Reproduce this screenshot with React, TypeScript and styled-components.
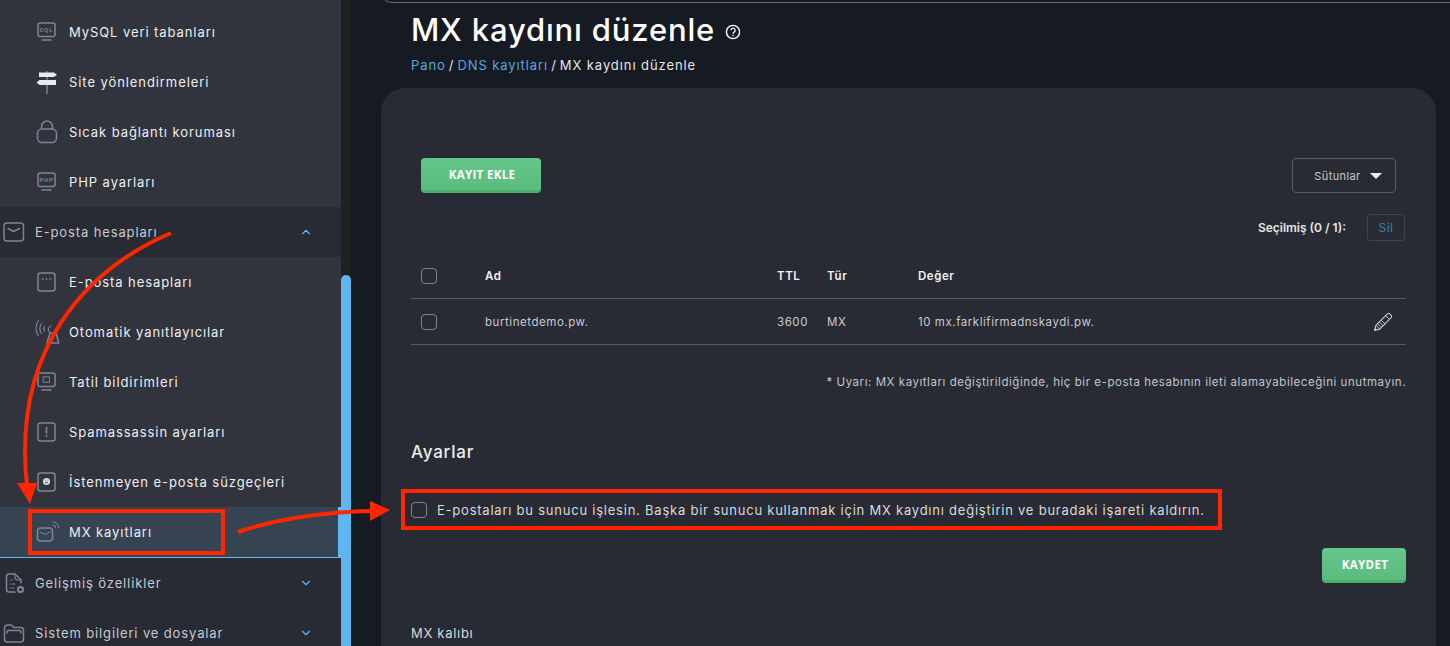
import React from 'react'
import styled, { createGlobalStyle } from 'styled-components'
import { ChevronDown, ChevronUp } from 'lucide-react'

const GlobalStyle = createGlobalStyle`
  html, body {
    margin: 0;
    height: 100%;
    overflow: hidden;
    background: #161a22;
    font-family: "Inter", "Liberation Sans", sans-serif;
  }
`

const iconColor = '#7d8598'

const Screen = styled.div`
  display: flex;
  width: 1450px;
  height: 646px;
  overflow: hidden;
  position: relative;
  background: #161a22;
`

const Sidebar = styled.nav`
  flex: 0 0 341px;
  height: 646px;
  overflow: hidden;
  background: #282b33;
`

const SubList = styled.div<{ $top?: number }>`
  background: #31343d;
  padding-top: ${(props) => props.$top || 0}px;
`

const SubRow = styled.div<{ $active?: boolean }>`
  height: 50px;
  display: flex;
  align-items: center;
  padding-left: 34px;
  box-sizing: border-box;
  color: #eceef2;
  font-size: 13px;
  letter-spacing: 0.92px;
  ${(props) =>
    props.$active &&
    `
    height: 51px;
    background: #364452;
    border-right: 3px solid #5eb6f2;
    border-bottom: 1px solid #5eb6f2;
  `}
`

const IconSlot = styled.span`
  width: 35px;
  flex: 0 0 35px;
  box-sizing: border-box;
  padding-left: 2px;
  display: flex;
  align-items: center;
  svg {
    display: block;
  }
`

const ResponderSlot = styled(IconSlot)`
  padding-left: 0;
  margin-left: 0;
`

const GroupRow = styled.div`
  height: 50px;
  display: flex;
  align-items: center;
  padding: 0 28px 0 3px;
  color: #c6c9d0;
  font-size: 13px;
  letter-spacing: 0.87px;
`

const GroupIcon = styled.span`
  width: 32px;
  flex: 0 0 32px;
  display: flex;
  align-items: center;
`

const GroupLabel = styled.span`
  flex: 1;
`

const Chevron = styled.span`
  color: #5eb6f2;
  display: flex;
`

const Track = styled.div`
  flex: 0 0 10px;
  height: 646px;
  background: #1f2022;
  display: flex;
  flex-direction: column;
  justify-content: flex-end;
`

const Thumb = styled.div`
  height: 371px;
  background: #5eb6f2;
  border-radius: 5px 5px 0 0;
`

const Main = styled.main`
  flex: 1;
  min-width: 0;
  padding: 0 14px 0 30px;
  position: relative;
`

const TopBarEdge = styled.div`
  position: absolute;
  top: -28px;
  left: 29px;
  right: -40px;
  height: 31px;
  border: 1px solid #6b6e76;
  border-radius: 12px;
  box-sizing: border-box;
`

const TitleRow = styled.div`
  display: flex;
  align-items: center;
  padding: 11px 0 0 30px;
  height: 37px;
`

const Title = styled.h1`
  margin: 0;
  color: #ffffff;
  font-size: 31px;
  font-weight: 500;
  letter-spacing: 0.83px;
  line-height: 37px;
`

const HelpIcon = styled.svg`
  margin-left: 10px;
  margin-top: 4px;
`

const Crumbs = styled.div`
  padding: 9px 0 0 30px;
  height: 16px;
  line-height: 16px;
  display: flex;
  gap: 3px;
  font-size: 13px;
  letter-spacing: 0.92px;
  color: #e4e6ea;
`

const CrumbLink = styled.span`
  color: #56a8e0;
`

const Card = styled.section`
  margin-top: 15px;
  height: 570px;
  background: #282b33;
  border-radius: 24px 24px 0 0;
  padding: 70px 30px 0;
  box-sizing: border-box;
`

const Toolbar = styled.div`
  display: flex;
  justify-content: space-between;
  padding: 0 10px;
`

const GreenButton = styled.button<{ $w: number }>`
  width: ${(props) => props.$w}px;
  height: 35px;
  padding: 1px 0 0 2px;
  border: 0;
  border-bottom: 3px solid #4cae6b;
  border-radius: 4px;
  background: linear-gradient(#65c689, #5abc7d);
  color: #ffffff;
  font-family: "Open Sans", sans-serif;
  font-size: 11.5px;
  font-weight: 700;
  letter-spacing: 0.35px;
`

const ColumnsButton = styled.button`
  width: 104px;
  height: 35px;
  padding: 0 0 0 8px;
  border: 1px solid #5a5e66;
  border-radius: 4px;
  background: transparent;
  color: #c8cad0;
  font-family: inherit;
  font-size: 11px;
  letter-spacing: 0.4px;
  display: flex;
  align-items: center;
  justify-content: center;
  gap: 9px;
`

const Caret = styled.span`
  width: 0;
  height: 0;
  border-left: 6px solid transparent;
  border-right: 6px solid transparent;
  border-top: 6px solid #f0f0f0;
`

const SelectedRow = styled.div`
  display: flex;
  justify-content: flex-end;
  align-items: center;
  margin-top: 21px;
  padding-right: 1px;
  gap: 21px;
`

const SelectedLabel = styled.span`
  color: #e4e6ea;
  font-size: 12px;
  font-weight: 600;
`

const DeleteButton = styled.button`
  width: 38px;
  height: 27px;
  padding: 0;
  border: 1px solid #3e434c;
  border-radius: 3px;
  background: transparent;
  color: #3a7fae;
  font-family: inherit;
  font-size: 12px;
  letter-spacing: 0.5px;
`

const Grid = styled.div`
  display: grid;
  grid-template-columns: 74px 292px 50px 91px 1fr 46px;
  margin-top: 12px;
`

const Cell = styled.div<{ $head?: boolean }>`
  height: 46px;
  display: flex;
  align-items: center;
  box-sizing: border-box;
  border-bottom: 1px solid #55585f;
  color: ${(props) => (props.$head ? '#f0f1f3' : '#c8cad0')};
  font-size: 11.5px;
  font-weight: ${(props) => (props.$head ? 600 : 400)};
  letter-spacing: 0.55px;
`

const ActionCell = styled(Cell)`
  justify-content: flex-end;
  padding-right: 13px;
`

const Box = styled.span`
  display: block;
  flex: 0 0 16px;
  width: 16px;
  height: 16px;
  box-sizing: border-box;
  border: 1px solid #7d8598;
  border-radius: 4px;
  background: transparent;
  margin-left: 10px;
`

const Warning = styled.p`
  margin: 29px 0 0;
  text-align: right;
  color: #c2c5cb;
  font-size: 11.5px;
  letter-spacing: 0.55px;
  line-height: 16px;
`

const SectionTitle = styled.h2`
  margin: 51px 0 0;
  color: #eceef2;
  font-size: 17px;
  font-weight: 500;
  letter-spacing: 0.8px;
  line-height: 22px;
`

const CheckRow = styled.label`
  display: flex;
  align-items: center;
  margin-top: 37px;
  height: 20px;
  color: #d8dade;
  font-size: 13px;
  letter-spacing: 0.77px;
  gap: 10px;
  white-space: nowrap;
  ${Box} {
    margin-left: 0;
  }
`

const SaveRow = styled.div`
  display: flex;
  justify-content: flex-end;
  margin-top: 28px;
`

const SubTitle = styled.div`
  margin-top: 40px;
  color: #d8dade;
  font-size: 13px;
  letter-spacing: 0.7px;
  line-height: 20px;
`

const RedBox = styled.div<{ $x: number; $y: number; $w: number; $h: number }>`
  position: absolute;
  left: ${(props) => props.$x}px;
  top: ${(props) => props.$y}px;
  width: ${(props) => props.$w}px;
  height: ${(props) => props.$h}px;
  box-sizing: border-box;
  border: 4px solid #ff2600;
`

const Arrows = styled.svg`
  position: absolute;
  left: 0;
  top: 0;
  pointer-events: none;
`

const Stroke = { fill: 'none', stroke: iconColor, strokeWidth: 1.5, strokeLinecap: 'round', strokeLinejoin: 'round' } as const

const Monitor: React.FC<{ children?: React.ReactNode }> = ({ children }) => (
  <svg width="20" height="20" viewBox="0 0 20 20">
    <rect x="2" y="1" width="17" height="13.5" rx="2" {...Stroke} />
    <path d="M6 18h9" {...Stroke} />
    {children}
  </svg>
)

const MonitorText = styled.text`
  font-family: "Liberation Sans", sans-serif;
  font-size: 5.5px;
  font-weight: 700;
  fill: #7d8598;
`

const SqlIcon = () => (
  <Monitor>
    <MonitorText x="10.5" y="10" textAnchor="middle">SQL</MonitorText>
  </Monitor>
)

const PhpIcon = () => (
  <Monitor>
    <MonitorText x="10.5" y="10" textAnchor="middle">PHP</MonitorText>
  </Monitor>
)

const HolidayIcon = () => (
  <Monitor>
    <rect x="7.5" y="4.8" width="6" height="5.5" {...Stroke} strokeWidth={1} />
  </Monitor>
)

const SignIcon = () => (
  <svg width="22" height="25" viewBox="0 0 22 25">
    <path d="M11 1v23" stroke={iconColor} strokeWidth="1.4" />
    <path d="M3 2.5h15l3 2.2-3 2.2H3z" fill="#e8e9ec" />
    <path d="M3.5 10H20v5H3.5L.5 12.5z" fill="#e8e9ec" />
  </svg>
)

const LockIcon = () => (
  <svg width="22" height="24" viewBox="0 0 22 24">
    <rect x="1.5" y="9" width="19" height="13.5" rx="4.5" {...Stroke} />
    <path d="M5.5 9V6.5a5.5 5.5 0 0 1 11 0V9" {...Stroke} />
  </svg>
)

const AccountIcon = () => (
  <svg width="20" height="20" viewBox="0 0 20 20">
    <rect x="2" y="1" width="17" height="18" rx="2.5" {...Stroke} />
    <path d="M6.5 7h.6M10.2 7h.6M13.9 7h.6" {...Stroke} />
  </svg>
)

const ResponderIcon = () => (
  <svg width="26" height="26" viewBox="0 0 26 26">
    <path d="M4.5 1.5a14 14 0 0 0-2.5 8 14 14 0 0 0 2.5 7.5M7.5 4.5a9 9 0 0 0 0 10M10.5 7a5 5 0 0 0 0 5" {...Stroke} strokeWidth={1.1} />
    <path d="M16 14h6l2.8 10H13z" {...Stroke} />
    <path d="M16 14a4 4 0 0 1 1-7" {...Stroke} strokeWidth={1.1} />
  </svg>
)

const AlertIcon = () => (
  <svg width="20" height="20" viewBox="0 0 20 20">
    <rect x="2" y="1" width="17" height="18" rx="2.5" {...Stroke} />
    <path d="M10.5 5.5v5.5M10.5 13.5v.6" {...Stroke} strokeWidth={1.7} />
  </svg>
)

const FilterIcon = () => (
  <svg width="20" height="20" viewBox="0 0 20 20">
    <rect x="2" y="1" width="17" height="18" rx="2.5" {...Stroke} />
    <circle cx="10.5" cy="9.5" r="3.6" fill="#d8dade" />
    <path d="M8.9 8.6h.4M11.7 8.6h.4M9.1 10.6h2.8" stroke="#31343d" strokeWidth="0.8" />
  </svg>
)

const MxIcon = () => (
  <svg width="24" height="24" viewBox="0 0 24 24">
    <rect x="1.5" y="8" width="15" height="13" rx="3" {...Stroke} />
    <path d="M4 12l5 2.5 5-2.5" {...Stroke} strokeWidth={1} />
    <path d="M17 5a3 3 0 0 1 3 3M17 2a6 6 0 0 1 6 6" {...Stroke} strokeWidth={1} />
  </svg>
)

const MailIcon = () => (
  <svg width="22" height="20" viewBox="0 0 22 20">
    <rect x="1" y="1" width="19.5" height="18" rx="3" {...Stroke} />
    <path d="M5 6.5l5.7 3 5.7-3" {...Stroke} />
  </svg>
)

const AdvancedIcon = () => (
  <svg width="22" height="22" viewBox="0 0 22 22">
    <path d="M12 20H6a2.5 2.5 0 0 1-2.5-2.5v-13A2.5 2.5 0 0 1 6 2h6l6 6v3" {...Stroke} />
    <path d="M12 2v3a3 3 0 0 0 3 3h3M7 8h.5M9 8h.5M7 12h.5M9 12h3M7 16h.5M9 16h2" {...Stroke} strokeWidth={1.1} />
    <circle cx="17.5" cy="17.5" r="2.6" fill="none" stroke={iconColor} strokeWidth="2" />
  </svg>
)

const FolderIcon = () => (
  <svg width="22" height="22" viewBox="0 0 22 22">
    <path d="M1.5 6a3 3 0 0 1 3-3h4l2.5 2.5h6.5a3 3 0 0 1 3 3V17a3 3 0 0 1-3 3h-13a3 3 0 0 1-3-3z" {...Stroke} />
    <path d="M4 11V10a1.5 1.5 0 0 1 1.5-1.5h11A1.5 1.5 0 0 1 18 10v1" {...Stroke} />
  </svg>
)

const PencilIcon = () => (
  <svg width="20" height="20" viewBox="0 0 20 20">
    <path d="M1.5 18.5l1.4-5.2L14.4 1.8a1.6 1.6 0 0 1 2.2 0l1.6 1.6a1.6 1.6 0 0 1 0 2.2L6.7 17.1z" fill="none" stroke="#c8cad0" strokeWidth="1.1" strokeLinejoin="round" />
    <path d="M2.9 13.3l3.8 3.8M12.6 3.6l3.8 3.8M4.8 12l3.8 3.8M6.6 10.2l3.8 3.8M8.4 8.4l3.8 3.8" stroke="#c8cad0" strokeWidth="0.9" fill="none" />
    <path d="M1.5 18.5l.7-2.6 1.9 1.9z" fill="#c8cad0" />
  </svg>
)

const topItems = [
  { label: 'MySQL veri tabanları', icon: <SqlIcon /> },
  { label: 'Site yönlendirmeleri', icon: <SignIcon /> },
  { label: 'Sıcak bağlantı koruması', icon: <LockIcon /> },
  { label: 'PHP ayarları', icon: <PhpIcon /> },
]

const App: React.FC = () => {
  return (
    <Screen>
      <GlobalStyle />
      <Sidebar>
        <SubList $top={7}>
          {topItems.map((item) => (
            <SubRow key={item.label}>
              <IconSlot>{item.icon}</IconSlot>
              {item.label}
            </SubRow>
          ))}
        </SubList>
        <GroupRow>
          <GroupIcon><MailIcon /></GroupIcon>
          <GroupLabel>E-posta hesapları</GroupLabel>
          <Chevron><ChevronUp size={14} strokeWidth={2} /></Chevron>
        </GroupRow>
        <SubList>
          <SubRow><IconSlot><AccountIcon /></IconSlot>E-posta hesapları</SubRow>
          <SubRow><ResponderSlot><ResponderIcon /></ResponderSlot>Otomatik yanıtlayıcılar</SubRow>
          <SubRow><IconSlot><HolidayIcon /></IconSlot>Tatil bildirimleri</SubRow>
          <SubRow><IconSlot><AlertIcon /></IconSlot>Spamassassin ayarları</SubRow>
          <SubRow><IconSlot><FilterIcon /></IconSlot>İstenmeyen e-posta süzgeçleri</SubRow>
        </SubList>
        <SubRow $active>
          <IconSlot><MxIcon /></IconSlot>
          MX kayıtları
        </SubRow>
        <GroupRow>
          <GroupIcon><AdvancedIcon /></GroupIcon>
          <GroupLabel>Gelişmiş özellikler</GroupLabel>
          <Chevron><ChevronDown size={14} strokeWidth={2} /></Chevron>
        </GroupRow>
        <GroupRow>
          <GroupIcon><FolderIcon /></GroupIcon>
          <GroupLabel>Sistem bilgileri ve dosyalar</GroupLabel>
          <Chevron><ChevronDown size={14} strokeWidth={2} /></Chevron>
        </GroupRow>
      </Sidebar>
      <Track><Thumb /></Track>
      <Main>
        <TopBarEdge />
        <TitleRow>
          <Title>MX kaydını düzenle</Title>
          <HelpIcon width="16" height="16" viewBox="0 0 16 16">
            <circle cx="8" cy="8" r="6.6" fill="none" stroke="#fff" strokeWidth="1.4" />
            <path d="M5.9 6.3a2.1 2.1 0 1 1 3.2 1.8c-.7.4-1.1.8-1.1 1.6" fill="none" stroke="#fff" strokeWidth="1.3" />
            <circle cx="8" cy="11.6" r="0.8" fill="#fff" />
          </HelpIcon>
        </TitleRow>
        <Crumbs>
          <CrumbLink>Pano</CrumbLink>
          <span>/</span>
          <CrumbLink>DNS kayıtları</CrumbLink>
          <span>/</span>
          <span>MX kaydını düzenle</span>
        </Crumbs>
        <Card>
          <Toolbar>
            <GreenButton $w={120}>KAYIT EKLE</GreenButton>
            <ColumnsButton>Sütunlar <Caret /></ColumnsButton>
          </Toolbar>
          <SelectedRow>
            <SelectedLabel>Seçilmiş (0 / 1):</SelectedLabel>
            <DeleteButton>Sil</DeleteButton>
          </SelectedRow>
          <Grid>
            <Cell $head><Box /></Cell>
            <Cell $head>Ad</Cell>
            <Cell $head>TTL</Cell>
            <Cell $head>Tür</Cell>
            <Cell $head>Değer</Cell>
            <Cell $head />
            <Cell><Box /></Cell>
            <Cell>burtinetdemo.pw.</Cell>
            <Cell>3600</Cell>
            <Cell>MX</Cell>
            <Cell>10 mx.farklifirmadnskaydi.pw.</Cell>
            <ActionCell><PencilIcon /></ActionCell>
          </Grid>
          <Warning>* Uyarı: MX kayıtları değiştirildiğinde, hiç bir e-posta hesabının ileti alamayabileceğini unutmayın.</Warning>
          <SectionTitle>Ayarlar</SectionTitle>
          <CheckRow>
            <Box />
            E-postaları bu sunucu işlesin. Başka bir sunucu kullanmak için MX kaydını değiştirin ve buradaki işareti kaldırın.
          </CheckRow>
          <SaveRow>
            <GreenButton $w={84}>KAYDET</GreenButton>
          </SaveRow>
          <SubTitle>MX kalıbı</SubTitle>
        </Card>
      </Main>
      <RedBox $x={28} $y={509} $w={197} $h={46} />
      <RedBox $x={401} $y={489} $w={821} $h={41} />
      <Arrows width="1450" height="646" viewBox="0 0 1450 646">
        <path d="M171 233C85 270 12 350 27 486" fill="none" stroke="#ff2600" strokeWidth="4" />
        <path d="M17 483L37 483L30 504z" fill="#ff2600" />
        <path d="M238 532C280 518 330 512 372 511" fill="none" stroke="#ff2600" strokeWidth="4" />
        <path d="M370 501L390 510L370 521z" fill="#ff2600" />
      </Arrows>
    </Screen>
  )
}

export default App
